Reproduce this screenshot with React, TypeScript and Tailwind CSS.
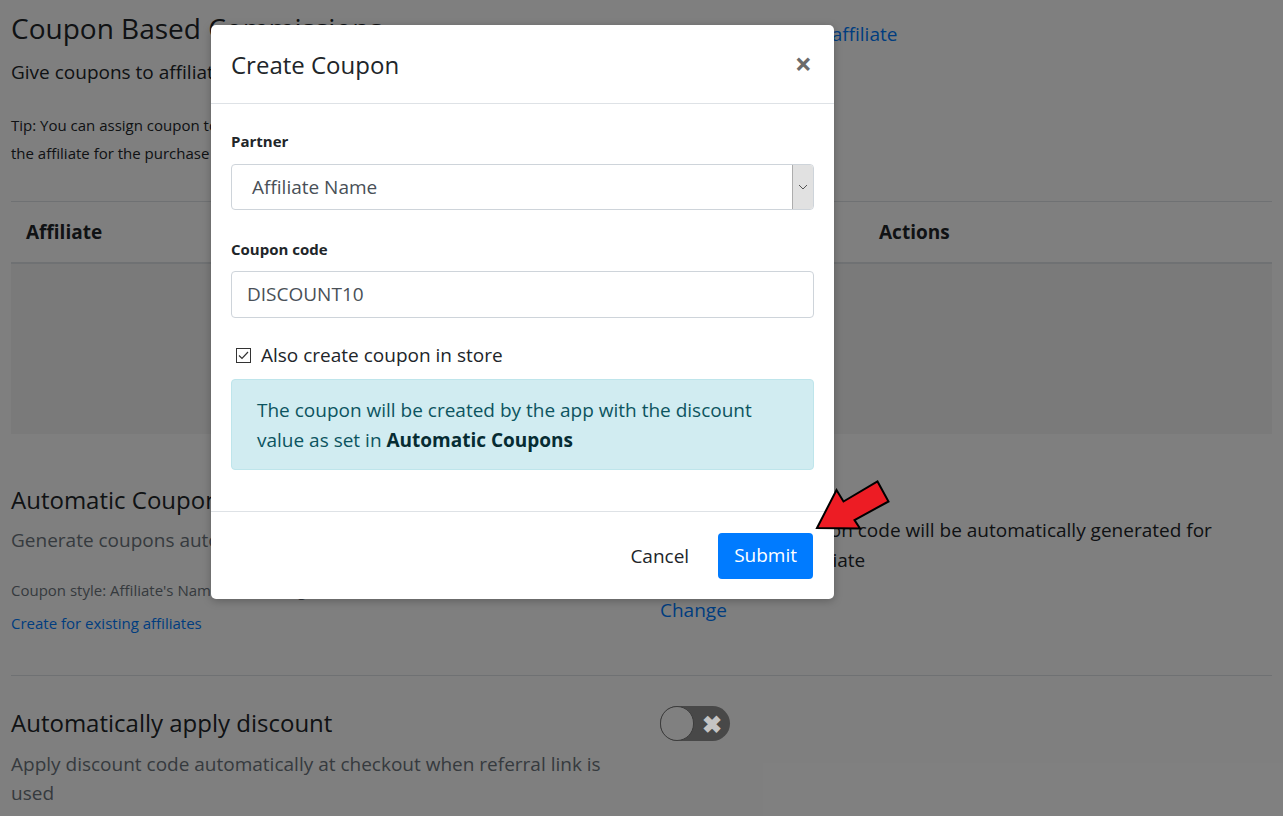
import React from "react";

function SelectChevron() {
  return (
    <svg width="10" height="6" viewBox="0 0 10 6" fill="none">
      <path d="M1 1l4 4 4-4" stroke="#555" strokeWidth="1" />
    </svg>
  );
}

function RedArrow() {
  return (
    <svg
      className="absolute left-[805px] top-[470px]"
      width="100"
      height="70"
      viewBox="805 470 100 70"
    >
      <polygon
        points="817,528 836.5,490 843.5,501.5 877.5,481.5 888.5,501.5 854.5,520 860,528.5"
        fill="#ed1c24"
        stroke="#000"
        strokeWidth="2"
        strokeLinejoin="miter"
      />
    </svg>
  );
}

export default function App() {
  return (
    <div className="relative h-[816px] overflow-hidden bg-white font-['Open_Sans',sans-serif] text-[#212529]">
      {/* PAGE UNDER THE MODAL */}
      <div className="px-[11px]">
        <div className="flex">
          <div className="w-[649px] shrink-0">
            <h2 className="pt-[8px] text-[28px] leading-[40px]">Coupon Based Commissions</h2>
            <p className="mt-[10px] text-[19px] leading-[28px]">Give coupons to affiliates and track sales made with them</p>
            <p className="mt-[25px] text-[15px] leading-[28px]">
              Tip: You can assign coupon to an affiliate, any purchase made with the coupon will credit
              <br />
              the affiliate for the purchase
            </p>
          </div>
          <div className="pt-[20px]">
            <a className="ml-[6px] text-[19px] leading-[28px] text-[#007bff]">Create coupon for affiliate</a>
          </div>
        </div>

        <div className="mt-[34px] border-t border-[#dee2e6]">
          <div className="flex h-[62px] items-center border-b-2 border-[#dee2e6] text-[19px] font-bold">
            <div className="w-[420px] pl-[15px]">Affiliate</div>
            <div className="w-[448px]">Coupon code</div>
            <div>Actions</div>
          </div>
          <div className="h-[170px] bg-[#f4f4f4]" />
        </div>

        <div className="flex">
          <div className="w-[649px] shrink-0">
            <h3 className="mt-[49px] text-[24px] leading-[34px]">Automatic Coupons</h3>
            <p className="mt-[9px] text-[19px] leading-[28px] text-[#6c757d]">Generate coupons automatically for new affiliates</p>
            <p className="mt-[22px] text-[15px] leading-[28px] text-[#6c757d]">Coupon style: Affiliate's Name + Percentage Off</p>
            <a className="mt-[5px] block text-[15px] leading-[28px] text-[#007bff]">Create for existing affiliates</a>
          </div>
          <div className="pt-[81px]">
            <p className="text-[19px] leading-[30px]">
              A new unique coupon code will be automatically generated for
              <br />
              each new store affiliate
            </p>
            <a className="mt-[21px] block text-[19px] leading-[28px] text-[#007bff]">Change</a>
          </div>
        </div>

        <div className="mt-[38px] flex border-t border-[#dee2e6]">
          <div className="w-[649px] shrink-0">
            <h3 className="mt-[30px] text-[24px] leading-[34px]">Automatically apply discount</h3>
            <p className="mt-[10px] max-w-[615px] text-[19px] leading-[29px] text-[#6c757d]">
              Apply discount code automatically at checkout when referral link is used
            </p>
          </div>
        </div>
      </div>

      {/* OVERLAY */}
      <div className="absolute inset-0 bg-black/50" />

      {/* TOGGLE (kept bright like the capture) */}
      <div className="absolute left-[660px] top-[706px] flex h-[35px] w-[70px] items-center rounded-full bg-[#484848]">
        <div className="h-[35px] w-[34px] rounded-full border border-[#3c3c3c] bg-[#808080]" />
        <span className="ml-[8px] text-[24px] font-bold leading-none text-[#c4c4c4]">✖</span>
      </div>

      {/* MODAL */}
      <div className="absolute left-[211px] top-[25px] w-[623px] rounded-[5px] bg-white shadow-[0_2px_8px_rgba(0,0,0,0.25)]">
        <div className="flex h-[79px] items-center justify-between border-b border-[#dee2e6] pl-[20px] pr-[22px]">
          <h5 className="pt-[1px] text-[24px] leading-[34px]">Create Coupon</h5>
          <span className="text-[30px] font-bold leading-none text-[#6b6b6b]">×</span>
        </div>

        <div className="px-[20px] pb-[41px] pt-[26px]">
          <label className="block text-[15px] font-bold leading-[22px]">Partner</label>
          <div className="mt-[12px] flex h-[46px] items-center overflow-hidden rounded-[4px] border border-[#ced4da]">
            <span className="flex-1 pl-[20px] text-[19px] text-[#495057]">Affiliate Name</span>
            <span className="flex h-full w-[21px] items-center justify-center border-l border-[#adadad] bg-[#e1e1e1]">
              <SelectChevron />
            </span>
          </div>

          <label className="mt-[28px] block text-[15px] font-bold leading-[22px]">Coupon code</label>
          <div className="mt-[11px] flex h-[47px] items-center rounded-[4px] border border-[#ced4da] pl-[15px] text-[19px] text-[#495057]">
            DISCOUNT10
          </div>

          <div className="mt-[24px] flex h-[27px] items-center">
            <span className="ml-[5px] flex h-[15px] w-[15px] items-center justify-center border border-[#333] bg-white">
              <svg width="11" height="9" viewBox="0 0 11 9" fill="none">
                <path d="M1 4.5l3 3L10 1" stroke="#333" strokeWidth="1.2" />
              </svg>
            </span>
            <span className="ml-[10px] text-[19px]">Also create coupon in store</span>
          </div>

          <div className="mt-[10px] h-[91px] rounded-[4px] border border-[#bee5eb] bg-[#d1ecf1] pl-[25px] pr-[40px] pt-[15px] text-[19px] leading-[30px] text-[#0c5460]">
            The coupon will be created by the app with the discount value as set in{" "}
            <b className="text-[#062c33]">Automatic Coupons</b>
          </div>
        </div>

        <div className="flex h-[88px] items-center justify-end border-t border-[#dee2e6] pr-[21px]">
          <button className="mr-[13px] px-[16px] text-[19px] leading-[46px] text-[#212529]">Cancel</button>
          <button className="h-[46px] rounded-[4px] bg-[#007bff] px-[16px] text-[19px] text-white">Submit</button>
        </div>
      </div>

      <RedArrow />
    </div>
  );
}
